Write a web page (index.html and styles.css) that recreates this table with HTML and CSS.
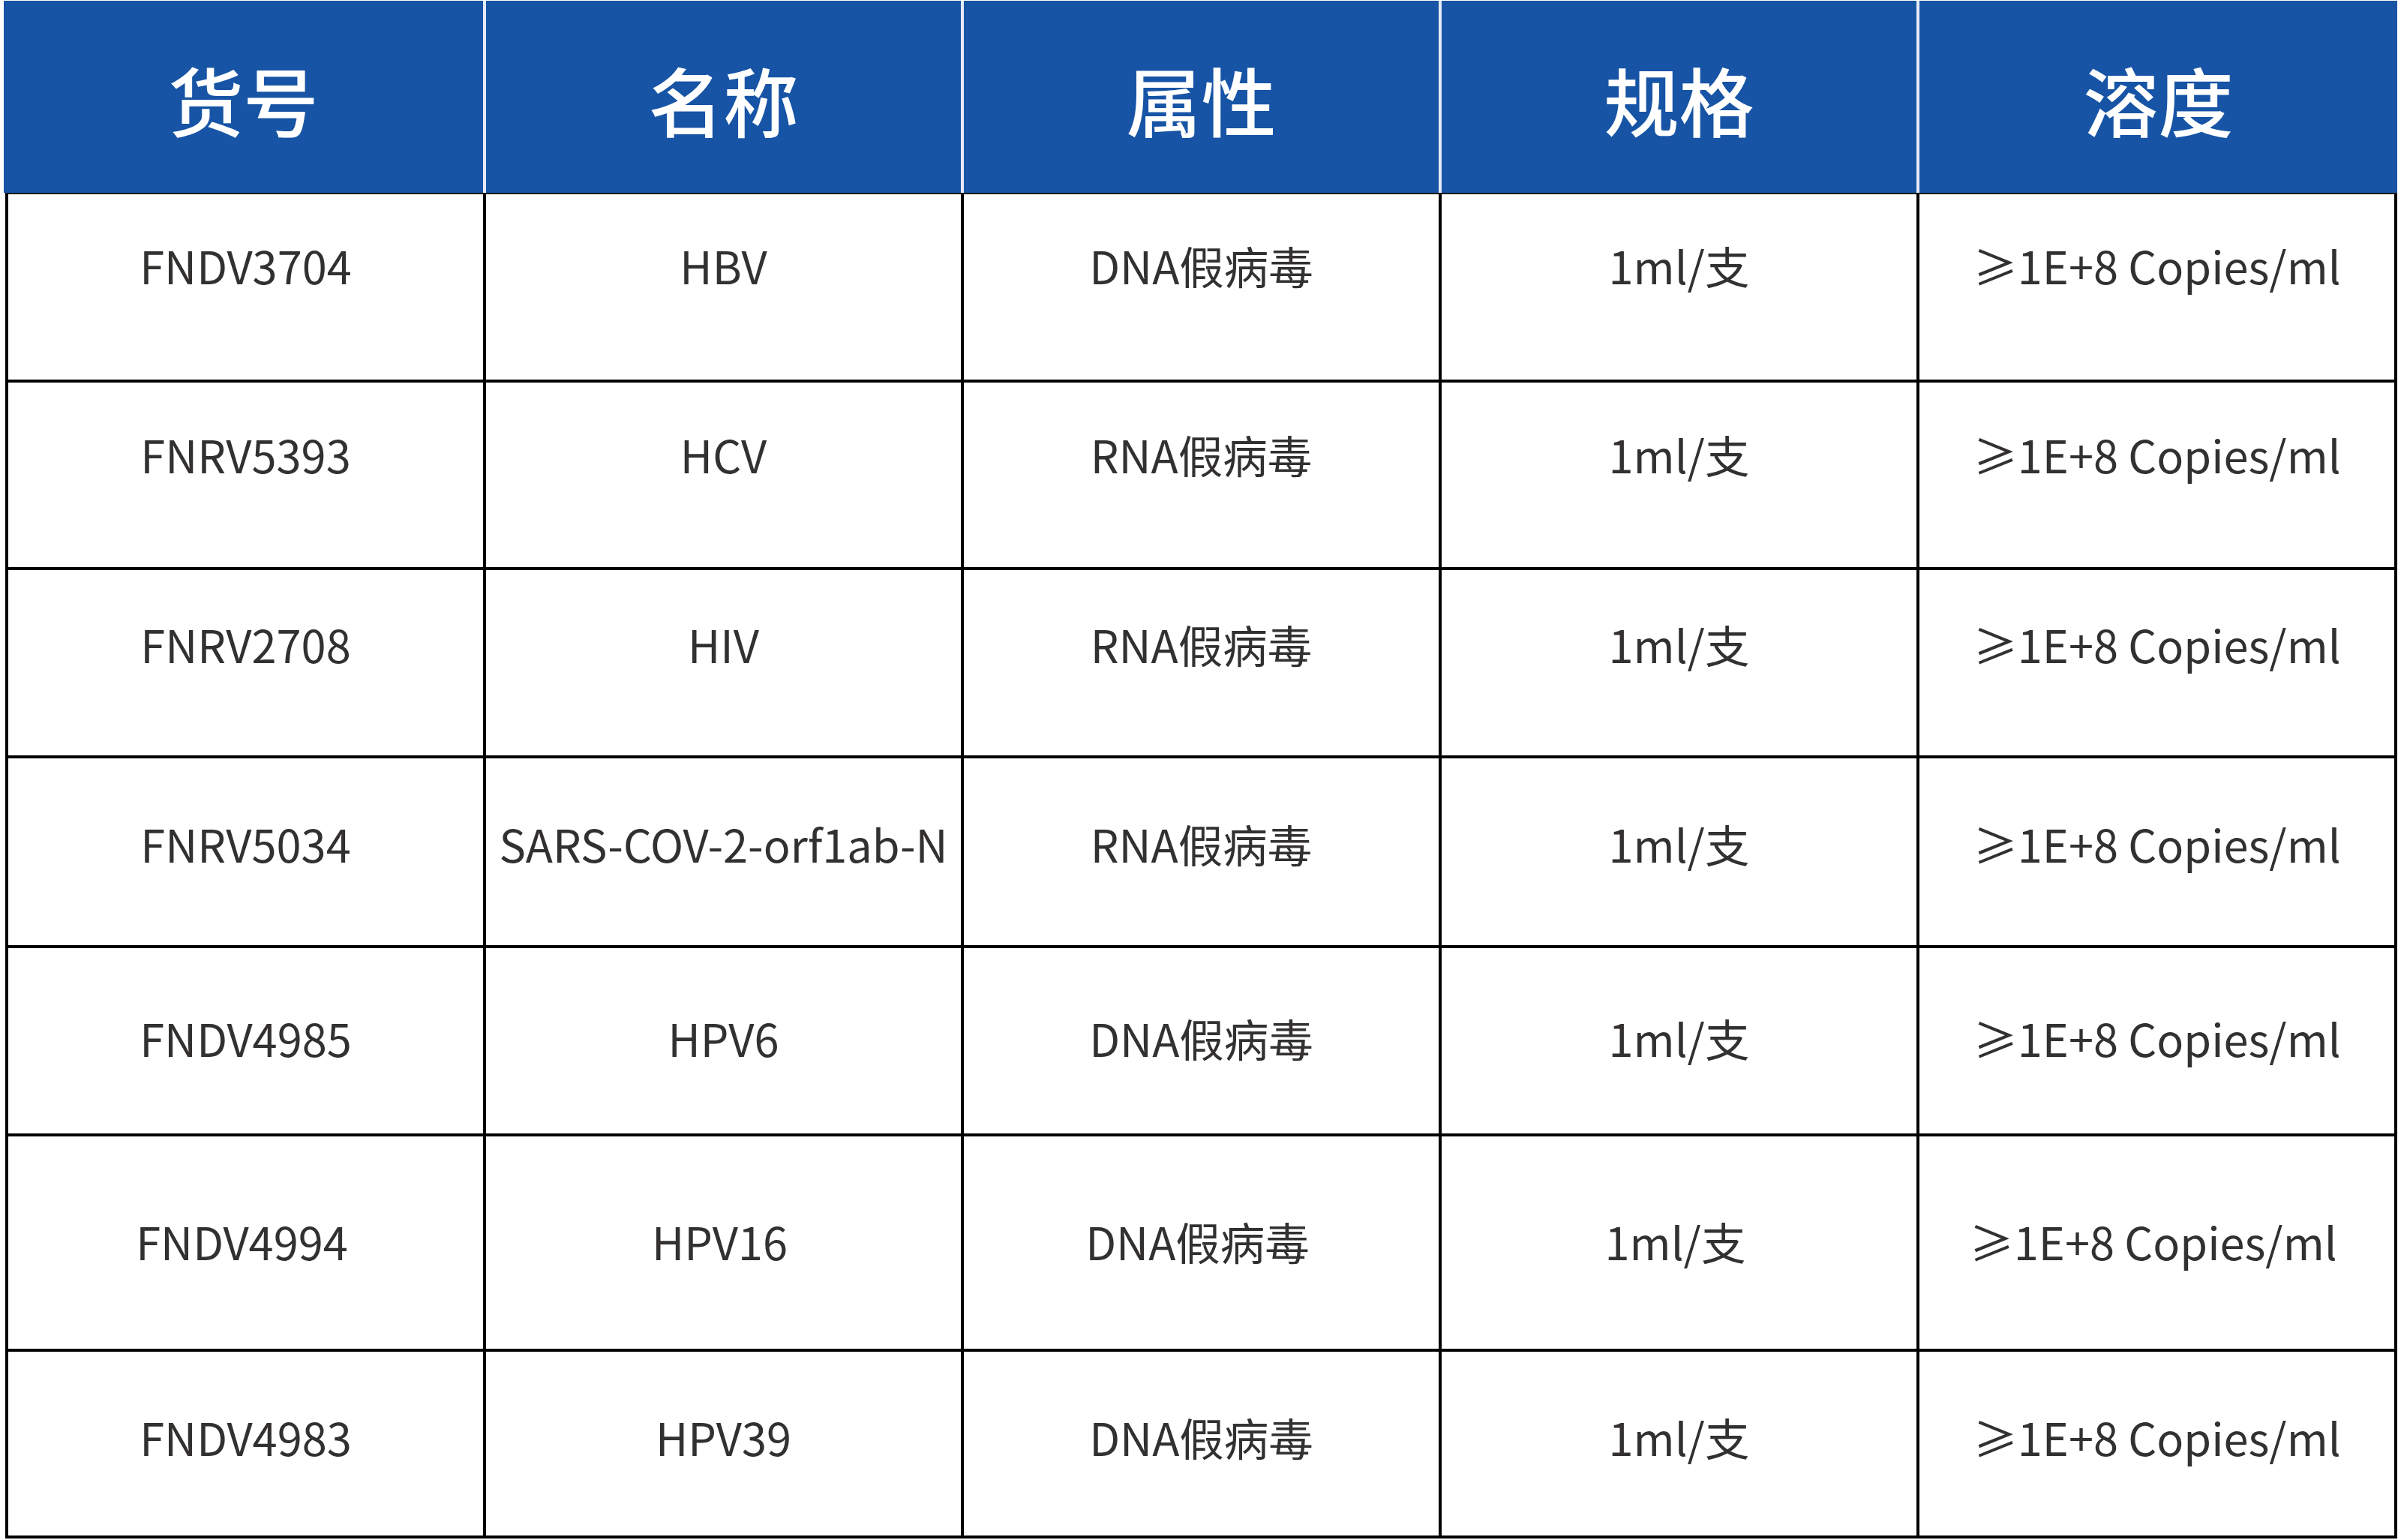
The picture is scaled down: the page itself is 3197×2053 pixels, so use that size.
FILE: index.html
```html
<!DOCTYPE html>
<html lang="zh-CN">
<head>
<meta charset="utf-8">
<title>假病毒产品列表</title>
<link rel="stylesheet" href="styles.css">
</head>
<body>
<div class="sheet">
  <div class="head">
    <div class="hc">货号</div>
    <div class="hc sep">名称</div>
    <div class="hc sep">属性</div>
    <div class="hc sep">规格</div>
    <div class="hc sep">溶度</div>
  </div>
  <div class="body">
    <div class="row r1">
      <div class="cell">FNDV3704</div>
      <div class="cell">HBV</div>
      <div class="cell">DNA假病毒</div>
      <div class="cell">1ml/支</div>
      <div class="cell">≥1E+8 Copies/ml</div>
    </div>
    <div class="row r2">
      <div class="cell">FNRV5393</div>
      <div class="cell">HCV</div>
      <div class="cell">RNA假病毒</div>
      <div class="cell">1ml/支</div>
      <div class="cell">≥1E+8 Copies/ml</div>
    </div>
    <div class="row r3">
      <div class="cell">FNRV2708</div>
      <div class="cell">HIV</div>
      <div class="cell">RNA假病毒</div>
      <div class="cell">1ml/支</div>
      <div class="cell">≥1E+8 Copies/ml</div>
    </div>
    <div class="row r4">
      <div class="cell">FNRV5034</div>
      <div class="cell">SARS-COV-2-orf1ab-N</div>
      <div class="cell">RNA假病毒</div>
      <div class="cell">1ml/支</div>
      <div class="cell">≥1E+8 Copies/ml</div>
    </div>
    <div class="row r5">
      <div class="cell">FNDV4985</div>
      <div class="cell">HPV6</div>
      <div class="cell">DNA假病毒</div>
      <div class="cell">1ml/支</div>
      <div class="cell">≥1E+8 Copies/ml</div>
    </div>
    <div class="row r6">
      <div class="cell">FNDV4994</div>
      <div class="cell">HPV16</div>
      <div class="cell">DNA假病毒</div>
      <div class="cell">1ml/支</div>
      <div class="cell">≥1E+8 Copies/ml</div>
    </div>
    <div class="row r7">
      <div class="cell">FNDV4983</div>
      <div class="cell">HPV39</div>
      <div class="cell">DNA假病毒</div>
      <div class="cell">1ml/支</div>
      <div class="cell">≥1E+8 Copies/ml</div>
    </div>
  </div>
</div>
</body>
</html>
```
FILE: styles.css
```css
html, body {
  margin: 0;
  padding: 0;
  background: #ffffff;
}

body {
  font-family: "Noto Sans CJK SC", "Noto Sans", sans-serif;
}

.sheet {
  margin: 1px 1px 0 5px;
  width: 3191px;
}

.head {
  display: grid;
  grid-template-columns: 639px 637px 637px 637px 641px;
  height: 256px;
  background: #1754a5;
}

.hc {
  display: flex;
  align-items: center;
  justify-content: center;
  color: #ffffff;
  font-size: 100px;
  font-weight: 500;
  line-height: 1;
  padding-top: 6px;
}

.hc.sep {
  border-left: 4px solid #e4eaf4;
}

.body {
  margin-left: 2px;
  width: 3189px;
  border-left: 4px solid #000000;
  border-top: 2px solid #1a1a1a;
  box-sizing: border-box;
}

.row {
  display: grid;
  grid-template-columns: repeat(5, 637px);
  border-bottom: 4px solid #000000;
}

.cell {
  display: flex;
  align-items: center;
  justify-content: center;
  border-right: 4px solid #000000;
  color: #333130;
  font-size: 59.5px;
  line-height: 1;
  white-space: nowrap;
}

.r1 { height: 247px; }
.r2 { height: 246px; }
.r3 { height: 247px; }
.r4 { height: 249px; }
.r5 { height: 247px; }
.r6 { height: 283px; }
.r7 { height: 245px; }

.r1 .cell { padding-bottom: 58px; }
.r2 .cell { padding-bottom: 54px; }
.r3 .cell { padding-bottom: 50px; }
.r4 .cell { padding-bottom: 22px; }
.r5 .cell { padding-bottom: 8px; }
.r6 .cell { padding-bottom: 4px; padding-right: 10px; }
.r7 .cell { padding-bottom: 18px; }
```
